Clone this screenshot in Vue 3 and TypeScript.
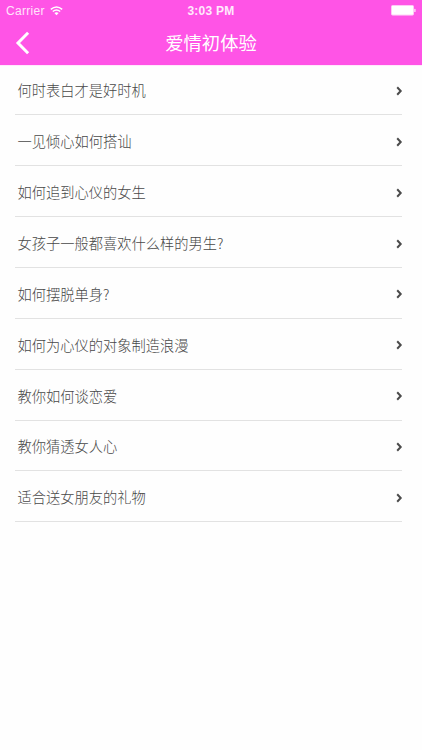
<script setup lang="ts">
const topics: string[] = [
  '何时表白才是好时机',
  '一见倾心如何搭讪',
  '如何追到心仪的女生',
  '女孩子一般都喜欢什么样的男生?',
  '如何摆脱单身?',
  '如何为心仪的对象制造浪漫',
  '教你如何谈恋爱',
  '教你猜透女人心',
  '适合送女朋友的礼物',
]
</script>

<template>
  <div class="screen">
    <header class="header">
      <div class="status">
        <div class="carrier">
          <span>Carrier</span>
          <svg class="wifi" width="13" height="10" viewBox="0 0 13 10" fill="none">
            <path d="M.8 3.4Q6.5-1.5 12.2 3.4" stroke="#fff" stroke-width="1.4" />
            <path d="M2.8 5.5Q6.5 2.3 10.2 5.5" stroke="#fff" stroke-width="1.4" />
            <path d="M4.4 7.1Q6.5 5.4 8.6 7.1L6.5 9.2Z" fill="#fff" />
          </svg>
        </div>
        <span class="clock">3:03 PM</span>
        <svg class="battery" width="25" height="11" viewBox="0 0 25 11">
          <rect x=".5" y=".5" width="22" height="9.6" rx="1" fill="#fff" stroke="#ffc8f6" />
          <rect x="23.2" y="3.8" width="1.4" height="3.2" rx=".6" fill="#ffd8f8" />
        </svg>
      </div>
      <nav class="nav">
        <svg class="back" width="16" height="24" viewBox="0 0 16 24" fill="none">
          <path d="M13.1 1.8L3 12L13.1 22.2" stroke="#fff" stroke-width="3" />
        </svg>
        <h1 class="title">爱情初体验</h1>
      </nav>
    </header>
    <ul class="list">
      <li v-for="topic in topics" :key="topic" class="row">
        <span class="label">{{ topic }}</span>
        <svg class="chevron" width="7" height="10" viewBox="0 0 7 10" fill="none">
          <path d="M1.2 1.3L4.7 5L1.2 8.7" stroke="#4b4b4b" stroke-width="2" />
        </svg>
      </li>
    </ul>
  </div>
</template>

<style>
body {
  margin: 0;
  background: #fff;
}
</style>

<style scoped>
.screen {
  box-sizing: border-box;
  width: 422px;
  height: 750px;
  overflow: hidden;
  background: #fefefe;
  font-family: 'Liberation Sans', 'Noto Sans CJK SC', sans-serif;
}
.header {
  height: 65px;
  background: #ff54e6;
  color: #fff;
  border-bottom: 1px solid #ffe9fc;
}
.status {
  display: grid;
  grid-template-columns: 1fr auto 1fr;
  align-items: center;
  height: 22px;
  padding: 0 6px;
  font-size: 12px;
  line-height: 22px;
}
.carrier {
  display: flex;
  align-items: center;
  gap: 5px;
  color: #ffe4fb;
  letter-spacing: 0.3px;
}
.wifi {
  margin-top: -1px;
}
.clock {
  font-weight: bold;
  color: #ffe9fc;
  letter-spacing: 0.25px;
}
.battery {
  justify-self: end;
  margin-top: -1px;
}
.nav {
  display: grid;
  grid-template-columns: 1fr auto 1fr;
  align-items: center;
  height: 42px;
  padding: 0 15px;
}
.title {
  grid-column: 2;
  margin: 0;
  font-family: 'Noto Sans CJK SC', sans-serif;
  font-size: 18.3px;
  font-weight: 400;
  line-height: 40px;
  height: 42px;
}
.list {
  margin: 0;
  padding: 0 20px 0 15px;
  list-style: none;
}
.row {
  box-sizing: border-box;
  display: flex;
  align-items: center;
  justify-content: space-between;
  height: 50.92px;
  padding: 2px 0 0 2.5px;
  border-bottom: 1px solid #e2e2e2;
}
.row:first-child {
  height: 49.1px;
}
.chevron {
  margin: 1.4px -1px 0 0;
}
.row:first-child .chevron {
  margin-top: 0;
}
.label {
  font-family: 'Noto Sans CJK SC', sans-serif;
  font-size: 14.25px;
  font-weight: 300;
  line-height: 20px;
  color: #484848;
}
.row:first-child .label {
  margin-top: -2px;
}
</style>
